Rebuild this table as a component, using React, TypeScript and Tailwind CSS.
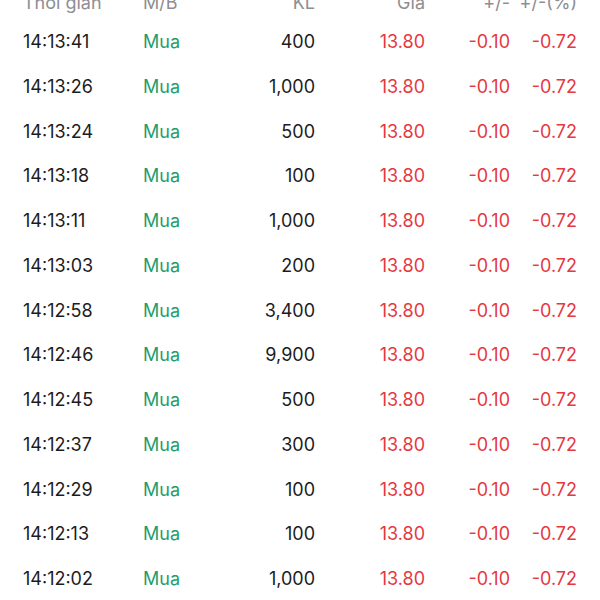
import React from "react";

type Trade = { time: string; side: string; vol: string };

const trades: Trade[] = [
  { time: "14:13:41", side: "Mua", vol: "400" },
  { time: "14:13:26", side: "Mua", vol: "1,000" },
  { time: "14:13:24", side: "Mua", vol: "500" },
  { time: "14:13:18", side: "Mua", vol: "100" },
  { time: "14:13:11", side: "Mua", vol: "1,000" },
  { time: "14:13:03", side: "Mua", vol: "200" },
  { time: "14:12:58", side: "Mua", vol: "3,400" },
  { time: "14:12:46", side: "Mua", vol: "9,900" },
  { time: "14:12:45", side: "Mua", vol: "500" },
  { time: "14:12:37", side: "Mua", vol: "300" },
  { time: "14:12:29", side: "Mua", vol: "100" },
  { time: "14:12:13", side: "Mua", vol: "100" },
  { time: "14:12:02", side: "Mua", vol: "1,000" },
];

const cols = "grid grid-cols-[120px_90px_82px_110px_85px_67px] items-center";

export default function App() {
  return (
    <div className="w-[600px] h-[600px] overflow-hidden bg-white font-['Inter','Liberation_Sans',sans-serif] text-[18px]">
      <div className="-mt-[14px] pl-[23px]">
        {/* header, partly scrolled off the top */}
        <div className={`${cols} h-[33.25px] text-[#8e8e93]`}>
          <span>Thời gian</span>
          <span>M/B</span>
          <span className="text-right">KL</span>
          <span className="text-right">Giá</span>
          <span className="text-right">+/-</span>
          <span className="text-right">+/-(%)</span>
        </div>
        {trades.map((t, i) => (
          <div key={i} className={`${cols} h-[44.75px]`}>
            <span className="text-[#1c1c1e]">{t.time}</span>
            <span className="text-[#1f9d6b]">{t.side}</span>
            <span className="text-right text-[#1c1c1e]">{t.vol}</span>
            <span className="text-right text-[#e5383f]">13.80</span>
            <span className="text-right text-[#e5383f]">-0.10</span>
            <span className="text-right text-[#e5383f]">-0.72</span>
          </div>
        ))}
      </div>
    </div>
  );
}
